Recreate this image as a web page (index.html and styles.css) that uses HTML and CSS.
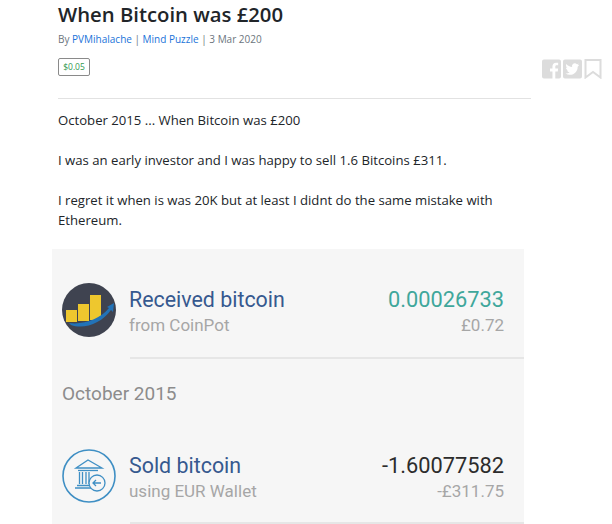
FILE: index.html
```html
<!DOCTYPE html>
<html lang="en">
<head>
  <meta charset="UTF-8" />
  <meta name="viewport" content="width=device-width, initial-scale=1" />
  <title>When Bitcoin was £200</title>
  <link rel="stylesheet" href="styles.css">
</head>
<body>
  <div class="page">
    <article class="post">
      <h1 class="post-title">When Bitcoin was £200</h1>
      <p class="post-meta">By <a href="#">PVMihalache</a> | <a href="#">Mind Puzzle</a> | 3 Mar 2020</p>
      <span class="earned"><span>$0.05</span></span>
      <hr class="rule">
      <p class="post-text">October 2015 ... When Bitcoin was £200</p>
      <p class="post-text">I was an early investor and I was happy to sell 1.6 Bitcoins £311.</p>
      <p class="post-text">I regret it when is was 20K but at least I didnt do the same mistake with Ethereum.</p>

      <div class="wallet">
        <div class="tx">
          <svg class="tx-icon" viewBox="0 0 54 54" aria-hidden="true">
            <circle cx="27" cy="27" r="27" fill="#3f4350"/>
            <g fill="#eec72e">
              <rect x="4" y="27" width="11" height="12"/>
              <rect x="16" y="21" width="11" height="17"/>
              <rect x="28" y="12" width="11" height="25"/>
            </g>
            <path d="M7 40 C22 42 38 36 47 25 L45 24 L52 20 L51 29 L49 27 C40 40 22 47 9 42 Z" fill="#2273b8"/>
          </svg>
          <div class="tx-main">
            <div class="tx-name">Received bitcoin</div>
            <div class="tx-from">from CoinPot</div>
          </div>
          <div class="tx-amounts">
            <div class="tx-amount tx-in">0.00026733</div>
            <div class="tx-fiat">£0.72</div>
          </div>
        </div>
        <div class="wallet-rule wallet-rule-top"></div>
        <div class="wallet-month">October 2015</div>
        <div class="tx tx-last">
          <svg class="tx-icon" viewBox="0 0 54 54" aria-hidden="true">
            <circle cx="27" cy="27" r="26" fill="none" stroke="#3f8fc4" stroke-width="1.600"/>
            <g fill="none" stroke="#3f8fc4" stroke-width="1.300">
              <path d="M14 19 L26 11 L40 19 Z"/>
              <path d="M16 21.500 H36"/>
              <path d="M17.500 23 V35 M20.500 23 V35 M24 23 V35 M27 23 V35"/>
              <path d="M15 36.500 H30 M13 39 H30"/>
              <circle cx="35" cy="34" r="8" fill="#f6f6f6"/>
              <path d="M39 34 H31 M34 31 L31 34 L34 37"/>
            </g>
          </svg>
          <div class="tx-main">
            <div class="tx-name">Sold bitcoin</div>
            <div class="tx-from">using EUR Wallet</div>
          </div>
          <div class="tx-amounts">
            <div class="tx-amount">-1.60077582</div>
            <div class="tx-fiat">-£311.75</div>
          </div>
        </div>
        <div class="wallet-rule wallet-rule-bottom"></div>
      </div>
    </article>

    <div class="share">
      <svg class="share-icon" viewBox="0 0 20 20" aria-label="Facebook">
        <path fill-rule="evenodd" d="M2 0 H18 A2 2 0 0 1 20 2 V18 A2 2 0 0 1 18 20 H14 V12.500 H16.600 L17 9.500 H14 V7.600 C14 6.700 14.300 6.100 15.500 6.100 H17 V3.400 C16.600 3.300 15.800 3.300 14.800 3.300 C12.500 3.300 11 4.700 11 7.200 V9.500 H8.400 V12.500 H11 V20 H2 A2 2 0 0 1 0 18 V2 A2 2 0 0 1 2 0 Z"/>
      </svg>
      <svg class="share-icon" viewBox="0 0 20 20" aria-label="Twitter">
        <path fill-rule="evenodd" d="M2 0 H18 A2 2 0 0 1 20 2 V18 A2 2 0 0 1 18 20 H2 A2 2 0 0 1 0 18 V2 A2 2 0 0 1 2 0 Z M17 5.400 C16.400 5.700 15.900 5.800 15.300 5.900 C15.900 5.500 16.400 5 16.600 4.300 C16 4.600 15.400 4.900 14.700 5 C13.400 3.600 11.300 3.700 10.200 5 C9.500 5.800 9.300 6.800 9.600 7.800 C7.200 7.700 5 6.500 3.600 4.700 C2.800 6 3.200 7.800 4.500 8.700 C4 8.700 3.500 8.500 3.100 8.300 C3.100 9.800 4.100 11 5.600 11.400 C5.100 11.500 4.700 11.500 4.200 11.400 C4.600 12.600 5.700 13.500 7 13.500 C5.700 14.500 4.200 15 2.600 14.800 C4 15.700 5.500 16.100 7.100 16.100 C12.500 16.100 15.600 11.600 15.400 7.500 C16 7 16.500 6.400 17 5.400 Z"/>
      </svg>
      <svg class="share-icon share-mark" viewBox="0 0 18 20" aria-label="Bookmark">
        <path d="M1.500 1 H16.500 V18.500 L9 13 L1.500 18.500 Z"/>
      </svg>
    </div>
  </div>
</body>
</html>
```

FILE: styles.css
```css
html, body {
  height: 100%;
}
body {
  margin: 0;
  overflow: hidden;
  background: #fff;
  color: #212529;
  font-family: "Open Sans", "Noto Sans", sans-serif;
}
a {
  color: #1a73d9;
  text-decoration: none;
}
.page {
  display: flex;
  align-items: flex-start;
  padding-left: 52px;
}
.post {
  width: 479px;
  flex: none;
}
.post-title {
  margin: 0 0 0 6px;
  font-size: 20.300px;
  line-height: 28px;
  font-weight: 600;
}
.post-meta {
  margin: 3px 0 0 6px;
  font-size: 10px;
  line-height: 16px;
  color: #6c757d;
}
.earned {
  display: block;
  width: 30px;
  height: 16px;
  margin: 11px 0 0 6px;
  border: 1px solid #8a8a8a;
  border-radius: 2px;
  text-align: center;
  font-size: 8.500px;
  line-height: 15px;
  color: #2f9a50;
}
.rule {
  margin: 22px 0 0 6px;
  border: 0;
  border-top: 1px solid #e2e2e2;
}
.post-text {
  margin: 11px 0 0 6px;
  padding-right: 30px;
  font-size: 13.150px;
  line-height: 20px;
}
.post-text + .post-text {
  margin-top: 20px;
}
.wallet {
  width: 472px;
  height: 275px;
  margin-top: 19px;
  padding-top: 34px;
  box-sizing: border-box;
  background: #f6f6f6;
  font-family: Roboto, "Noto Sans", sans-serif;
}
.tx {
  display: flex;
  align-items: center;
  gap: 13px;
  padding: 0 20px 0 10px;
}
.tx-last {
  margin-top: 42px;
}
.tx-icon {
  width: 54px;
  height: 54px;
  flex: none;
}
.tx-main {
  flex: 1;
  padding-top: 1px;
}
.tx-name {
  font-size: 21.400px;
  line-height: 28px;
  color: #36598f;
}
.tx-from, .tx-fiat {
  font-size: 17px;
  line-height: 22px;
  color: #a6a6a6;
}
.tx-amounts {
  padding-top: 1px;
  text-align: right;
}
.tx-amount {
  font-size: 21.800px;
  line-height: 28px;
  color: #2c2c2c;
}
.tx-in {
  color: #3fa79b;
}
.wallet-rule {
  height: 2px;
  margin-left: 78px;
  background: #e6e6e6;
}
.wallet-rule-top {
  margin-top: 20px;
}
.wallet-rule-bottom {
  margin-top: 19px;
}
.wallet-month {
  margin: 22px 0 0 10px;
  font-size: 19px;
  line-height: 26px;
  color: #8c8c8c;
}
.share {
  display: flex;
  gap: 2px;
  margin: 59px 0 0 11px;
}
.share-icon {
  width: 19px;
  height: 20px;
  fill: #dcdcdc;
}
.share-mark {
  width: 18px;
  fill: none;
  stroke: #dcdcdc;
  stroke-width: 2;
}
```
